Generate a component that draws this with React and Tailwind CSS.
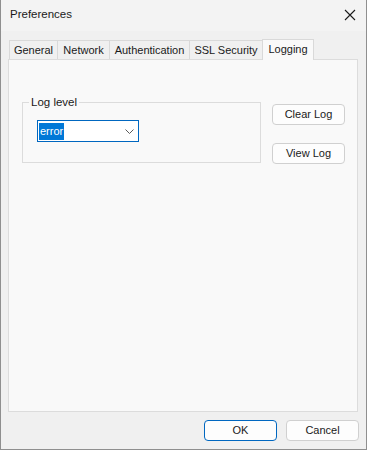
import { useState } from 'react'

const TABS = [
  { label: 'General', w: 'w-[49px]' },
  { label: 'Network', w: 'w-[53px]' },
  { label: 'Authentication', w: 'w-[81px]' },
  { label: 'SSL Security', w: 'w-[74px]' },
  { label: 'Logging', w: 'w-[52px]' },
]

function CloseIcon() {
  return (
    <svg width="12" height="12" viewBox="0 0 12 12" className="block">
      <path d="M1 1 L11 11 M11 1 L1 11" stroke="#1a1a1a" strokeWidth="1.1" fill="none" />
    </svg>
  )
}

function Chevron() {
  return (
    <svg width="9" height="5" viewBox="0 0 9 5" className="block">
      <path d="M0.5 0.5 L4.5 4.5 L8.5 0.5" stroke="#5a5a5a" strokeWidth="1" fill="none" />
    </svg>
  )
}

function Button({ children, primary = false }) {
  return (
    <button
      className={`w-[73px] h-[21px] rounded-[4px] bg-[#fdfdfd] text-[11px] text-[#1a1a1a] leading-none flex items-center justify-center border ${
        primary ? 'border-[#0067c0]' : 'border-[#d0d0d0]'
      }`}
    >
      {children}
    </button>
  )
}

export default function App() {
  const [active, setActive] = useState('Logging')

  return (
    <div className="w-[367px] h-[450px] bg-[#f0f0f0] border-l border-r border-b border-[#8f8f8f] flex flex-col font-['Liberation_Sans',Arial,sans-serif] text-[11px] text-[#1a1a1a] select-none">
      {/* Title bar */}
      <div className="h-[31px] bg-[#f3f3f3] flex items-center justify-between pl-[9px] pr-[10px]">
        <span className="text-[11.5px] mt-[-1px]">Preferences</span>
        <span className="mt-[-2px]"><CloseIcon /></span>
      </div>

      {/* Tab strip */}
      <div className="flex items-end pl-[8px] h-[28px]">
        {TABS.map((t, i) => {
          const sel = t.label === active
          return (
            <div
              key={t.label}
              onClick={() => setActive(t.label)}
              className={`${t.w} ${i > 0 ? '-ml-px' : ''} relative flex items-center justify-center border border-b-0 border-[#d9d9d9] ${
                sel ? 'h-[21px] bg-[#f9f9f9] z-10 mb-[-1px] pb-[2px]' : 'h-[19px] bg-[#f0f0f0]'
              }`}
            >
              {t.label}
            </div>
          )
        })}
      </div>

      {/* Panel */}
      <div className="ml-[7px] w-[350px] h-[353px] bg-[#f9f9f9] border border-[#dcdcdc] flex items-start pl-[13px] pt-[35px]">
        <fieldset className="w-[239px] h-[68px] border border-[#dcdcdc] pl-[14px] pt-[11px]">
          <legend className="ml-[-8px] px-[2px] text-[11.5px] leading-[14px]">Log level</legend>
          <div className="w-[102px] h-[22px] bg-white border border-[#0067c0] flex items-center justify-between pl-[1px] pr-[4px]">
            <span className="bg-[#0078d7] text-white h-[17px] px-[1px] flex items-center leading-none">error</span>
            <Chevron />
          </div>
        </fieldset>
        <div className="ml-[11px] mt-[9px] flex flex-col gap-[18px]">
          <Button>Clear Log</Button>
          <Button>View Log</Button>
        </div>
      </div>

      {/* Footer buttons */}
      <div className="flex justify-end gap-[9px] pr-[7px] pt-[8px]">
        <Button primary>OK</Button>
        <Button>Cancel</Button>
      </div>
    </div>
  )
}
